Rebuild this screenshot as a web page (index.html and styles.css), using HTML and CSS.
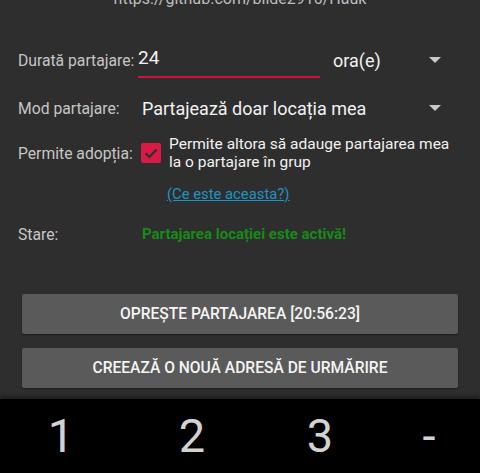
FILE: index.html
```html
<!DOCTYPE html>
<html lang="ro">
<head>
  <meta charset="UTF-8">
  <meta name="viewport" content="width=device-width, initial-scale=1.0">
  <title>Hauk</title>
  <link rel="stylesheet" href="styles.css">
</head>
<body>
  <div class="content">
    <p class="url">https://github.com/bilde2910/Hauk</p>

    <div class="row row-duration">
      <span class="label">Durată partajare:</span>
      <div class="field"><span class="value">24</span></div>
      <div class="spinner spinner-unit">
        <span class="value">ora(e)</span>
        <span class="arrow"></span>
      </div>
    </div>

    <div class="row row-mode">
      <span class="label">Mod partajare:</span>
      <div class="spinner spinner-mode">
        <span class="value">Partajează doar locația mea</span>
        <span class="arrow"></span>
      </div>
    </div>

    <div class="row row-adopt">
      <span class="label">Permite adopția:</span>
      <div class="check">
        <span class="box">
          <svg viewBox="0 0 20 20" width="20" height="20">
            <polyline points="4.6,10.2 8.4,14 15.6,6.6" fill="none" stroke="#2e2e2e" stroke-width="2.2"/>
          </svg>
        </span>
        <span class="check-text">Permite altora să adauge partajarea mea la o partajare în grup</span>
      </div>
    </div>

    <div class="row row-link">
      <span class="label"></span>
      <a class="help" href="#">(Ce este aceasta?)</a>
    </div>

    <div class="row row-status">
      <span class="label">Stare:</span>
      <span class="status">Partajarea locației este activă!</span>
    </div>
  </div>

  <div class="actions">
    <button class="btn">Oprește partajarea [20:56:23]</button>
    <button class="btn">Creează o nouă adresă de urmărire</button>
  </div>

  <div class="keypad">
    <span class="key">1</span>
    <span class="key">2</span>
    <span class="key">3</span>
    <span class="key">-</span>
  </div>
</body>
</html>
```

FILE: styles.css
```css
body {
  margin: 0;
  height: 473px;
  overflow: hidden;
  background: #2e2e2e;
  font-family: Roboto, "Noto Sans", sans-serif;
  color: #f2f2f2;
}
.content {
  padding: 0 39px 0 18px;
}
.url {
  margin: -11px 0 0;
  padding-left: 21px;
  height: 20px;
  line-height: 20px;
  font-size: 16px;
  color: #bdbdbd;
  text-align: center;
}
.row {
  display: flex;
  align-items: center;
}
.label {
  width: 120px;
  flex: none;
  font-size: 15.7px;
  color: #c6c6c6;
}
.row-duration {
  height: 36px;
  margin-top: 33px;
}
.field {
  width: 182px;
  height: 36px;
  box-sizing: border-box;
  border-bottom: 2px solid #cf143c;
  display: flex;
  align-items: center;
  padding-bottom: 4px;
}
.field .value {
  font-size: 19px;
}
.spinner {
  display: flex;
  align-items: center;
  flex: 1;
}
.spinner .value {
  font-size: 18px;
}
.spinner-unit {
  padding-left: 13px;
}
.spinner-mode {
  padding-left: 4px;
}
.arrow {
  margin-left: auto;
  width: 0;
  height: 0;
  border-left: 6px solid transparent;
  border-right: 6px solid transparent;
  border-top: 6px solid #c8c8c8;
}
.row-mode {
  height: 36px;
  margin-top: 12px;
}
.row-adopt {
  height: 36px;
  margin-top: 9px;
  margin-right: -24px;
}
.check {
  display: flex;
  align-items: center;
  margin-left: 3px;
}
.box {
  width: 20px;
  height: 20px;
  flex: none;
  border-radius: 2px;
  background: #d81b45;
  display: flex;
}
.check-text {
  margin-left: 8px;
  font-size: 15.5px;
  line-height: 18px;
}
.row-link {
  height: 20px;
  margin-top: 13px;
}
.help {
  margin-left: 29px;
  font-size: 14.8px;
  color: #1f93c4;
}
.row-status {
  height: 20px;
  margin-top: 20px;
}
.status {
  margin-left: 4px;
  font-size: 15px;
  font-weight: bold;
  color: #168b16;
}
.actions {
  display: flex;
  flex-direction: column;
  gap: 14px;
  padding: 0 22px;
  margin-top: 50px;
}
.btn {
  height: 40px;
  border: none;
  border-radius: 2px;
  background: #5a5a5a;
  color: #f4f4f4;
  font-family: Roboto, "Noto Sans", sans-serif;
  font-size: 15.6px;
  font-weight: 500;
  text-transform: uppercase;
  box-shadow: 0 1px 2px rgba(0, 0, 0, 0.4);
}
.keypad {
  margin-top: 11px;
  height: 74px;
  background: #000;
  box-shadow: 0 -3px 4px rgba(0, 0, 0, 0.35);
  display: grid;
  grid-template-columns: 122px 140px 116px 1fr;
  align-items: center;
}
.key {
  text-align: center;
  font-size: 47px;
  color: #d2d2d2;
  padding-bottom: 2px;
}
```
